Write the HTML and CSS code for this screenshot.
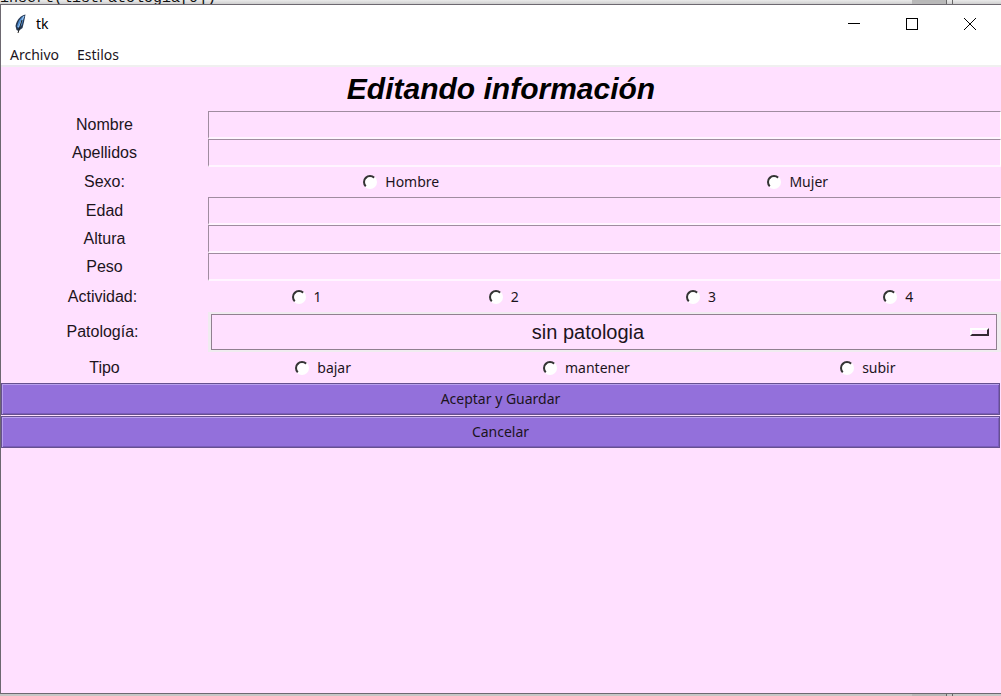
FILE: index.html
```
<!DOCTYPE html>
<html lang="es">
<head>
<meta charset="utf-8">
<title>tk</title>
<link rel="stylesheet" href="styles.css">
</head>
<body>
<div class="backdrop"><code class="code">insert(listPatologia[0])</code><span class="scroll"></span><span class="edge"></span></div>
<div class="window">
  <header class="titlebar">
    <svg class="feather" viewBox="0 0 14 20" aria-hidden="true">
      <path d="M11.5 0.5C7 1 2.500 6 1.500 12L2.500 16L4.500 17L8.500 14L10 8Z" fill="#243650"/>
      <path d="M10.500 1.500C7 3 4 7 3 13L5 14L8 11L9 7Z" fill="#4f8dd0"/>
      <path d="M10 2L4.500 13" stroke="#a9cdf2" stroke-width="1"/>
      <path d="M8 6L4 19" stroke="#222" stroke-width="1"/>
    </svg>
    <span class="caption">tk</span>
    <button class="win-btn" aria-label="Minimizar"><svg viewBox="0 0 12 12" class="glyph"><path d="M0 5.5H12"/></svg></button>
    <button class="win-btn" aria-label="Maximizar"><svg viewBox="0 0 12 12" class="glyph"><path d="M.5 .5H11.500V11.500H.5Z"/></svg></button>
    <button class="win-btn" aria-label="Cerrar"><svg viewBox="0 0 12 12" class="glyph smooth"><path d="M0 0L12 12M12 0L0 12"/></svg></button>
  </header>
  <nav class="menu">
    <button class="menu-item">Archivo</button>
    <button class="menu-item">Estilos</button>
  </nav>
  <form class="form">
    <h1 class="heading">Editando información</h1>
    <div class="row"><label class="label" for="nombre">Nombre</label><input class="entry" id="nombre" type="text"></div>
    <div class="row"><label class="label" for="apellidos">Apellidos</label><input class="entry" id="apellidos" type="text"></div>
    <div class="row sexo-row" role="radiogroup" aria-labelledby="sexo"><span class="label" id="sexo">Sexo:</span>
      <div class="options two">
        <label class="option"><input class="radio" type="radio" name="sexo">Hombre</label>
        <label class="option"><input class="radio" type="radio" name="sexo">Mujer</label>
      </div>
    </div>
    <div class="row"><label class="label" for="edad">Edad</label><input class="entry" id="edad" type="text"></div>
    <div class="row"><label class="label" for="altura">Altura</label><input class="entry" id="altura" type="text"></div>
    <div class="row"><label class="label" for="peso">Peso</label><input class="entry" id="peso" type="text"></div>
    <div class="row choice-row" role="radiogroup" aria-labelledby="actividad"><span class="label wide" id="actividad">Actividad:</span>
      <div class="options four">
        <label class="option"><input class="radio" type="radio" name="actividad">1</label>
        <label class="option"><input class="radio" type="radio" name="actividad">2</label>
        <label class="option"><input class="radio" type="radio" name="actividad">3</label>
        <label class="option"><input class="radio" type="radio" name="actividad">4</label>
      </div>
    </div>
    <div class="row"><label class="label wide" for="patologia">Patología:</label>
      <div class="picker"><select class="select" id="patologia"><option>sin patologia</option></select><span class="indicator"></span></div>
    </div>
    <div class="row choice-row" role="radiogroup" aria-labelledby="tipo"><span class="label" id="tipo">Tipo</span>
      <div class="options three">
        <label class="option"><input class="radio" type="radio" name="tipo">bajar</label>
        <label class="option"><input class="radio" type="radio" name="tipo">mantener</label>
        <label class="option"><input class="radio" type="radio" name="tipo">subir</label>
      </div>
    </div>
    <button class="action" type="button">Aceptar y Guardar</button>
    <button class="action" type="button">Cancelar</button>
  </form>
</div>
<div class="backdrop bottom"><span class="scroll"></span><span class="edge"></span></div>
</body>
</html>
```
FILE: styles.css
```
* { box-sizing: border-box; }

body {
  margin: 0;
  height: 100vh;
  display: flex;
  flex-direction: column;
  overflow: hidden;
  font: 14px/20px "Noto Sans", sans-serif;
  color: #1c141c;
}

button, input, select { font: inherit; color: inherit; margin: 0; }

.backdrop {
  height: 4px;
  flex: none;
  display: flex;
  align-items: flex-end;
  overflow: hidden;
  background: linear-gradient(#eaeaea, #cfcfcf);
}
.backdrop.bottom { height: 2px; background: #c6c6c6; }
.code { font: 15px/10px "Liberation Mono", monospace; color: #111; }
.scroll { margin-left: auto; width: 34px; height: 100%; background: #b8b8b8; }
.edge {
  width: 7px;
  height: 100%;
  border: solid #666;
  border-width: 0 1px;
  margin-right: 48px;
}

.window {
  flex: 1;
  display: flex;
  flex-direction: column;
  border: 1px solid #6d6870;
  border-right: 0;
  background: #fff;
}

.titlebar { display: flex; align-items: center; height: 38px; padding: 0 2px 0 13px; color: #000; }
.feather { width: 14px; height: 20px; fill: none; }
.caption { margin: 0 auto 0 8px; }
.win-btn {
  width: 58px;
  height: 38px;
  padding: 0;
  border: 0;
  background: none;
  display: grid;
  place-items: center;
}
.glyph { width: 12px; height: 12px; fill: none; stroke: #000; shape-rendering: crispEdges; }
.smooth { shape-rendering: auto; }

.menu { display: flex; height: 24px; border-bottom: 2px solid #f0f0f0; }
.menu-item { border: 0; background: none; padding: 0 9px; line-height: 24px; height: 24px; }

.form { flex: 1; display: flex; flex-direction: column; background: #ffe0ff; }
.heading {
  margin: 0;
  text-align: center;
  color: #000;
  font: italic bold 30px/44px "Liberation Sans", Arial, sans-serif;
}

.row { display: grid; grid-template-columns: 207px 1fr; align-items: center; }
.sexo-row { height: 30px; }
.choice-row { height: 31px; }
.label { text-align: center; font: 16px/20px "Liberation Sans", Arial, sans-serif; }
.wide { padding-right: 4px; }

.entry {
  width: 100%;
  min-width: 0;
  height: 28px;
  padding: 0 4px;
  border: 1px solid #a08ca0;
  border-right-color: #fff;
  border-bottom: 2px solid #fff5ff;
  background: #ffe0ff;
  border-radius: 0;
  outline: 0;
}

.options { display: grid; }
.two { grid-template-columns: 386fr 406fr; }
.three { grid-template-columns: 230fr 296fr 266fr; }
.four { grid-template-columns: repeat(4, 1fr); padding-right: 4px; }
.option { display: flex; justify-content: center; align-items: center; gap: 8px; }
.radio {
  appearance: none;
  width: 14px;
  height: 14px;
  border-radius: 50%;
  border: 2px solid #fff;
  border-top-color: #333;
  border-left-color: #333;
  background: #fff;
}

.picker {
  display: grid;
  align-items: center;
  border: solid #f0ecf0;
  border-width: 2px 4px 2px 3px;
}
.select, .indicator { grid-area: 1 / 1; }
.select {
  appearance: none;
  width: 100%;
  height: 36px;
  padding: 0 32px 0 0;
  border: 1px solid #908090;
  border-radius: 0;
  background: #ffe0ff;
  text-align: center;
  text-align-last: center;
  font: 20px/24px "Liberation Sans", Arial, sans-serif;
}
.indicator {
  justify-self: end;
  width: 19px;
  height: 8px;
  margin-right: 8px;
  border: 2px solid #332833;
  border-top-color: #fff;
  border-left-color: #fff;
  pointer-events: none;
}

.action {
  height: 32px;
  padding: 0;
  margin-right: 1px;
  border: 1px solid #66518f;
  background: #9370db;
  box-shadow: inset 1px 1px #b9a0ee, inset -1px -1px #7a5cba;
}
.action + .action { margin-top: 1px; }
```
